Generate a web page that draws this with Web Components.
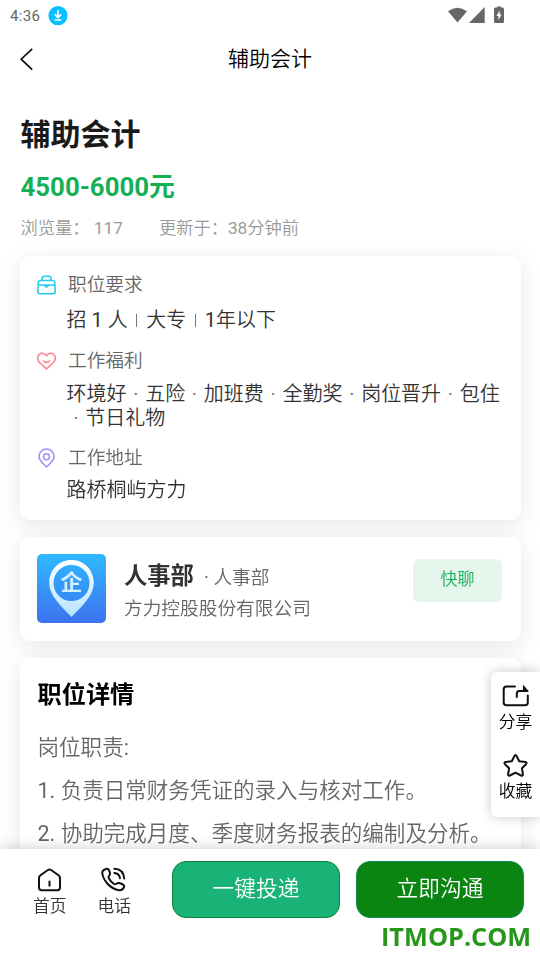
<!DOCTYPE html>
<html lang="zh-CN">
<head>
<meta charset="utf-8">
<title>辅助会计</title>
<style>
html,body{margin:0;height:100%;overflow:hidden;background:#fff}
body{font-family:Roboto,"Noto Sans CJK SC DemiLight","Noto Sans CJK SC",sans-serif;color:#333}
</style>
</head>
<body>
<job-page></job-page>
<script>
function define(name, html) {
  const t = document.createElement('template');
  t.innerHTML = html;
  customElements.define(name, class extends HTMLElement {
    constructor() {
      super();
      this.attachShadow({ mode: 'open' }).append(t.content.cloneNode(true));
    }
  });
}

define('status-bar', `
<style>
:host{display:flex;height:32px;align-items:center;box-sizing:border-box;padding:0 35px 0 10px;color:#666;font-size:15px;letter-spacing:.35px;flex:none}
span{width:38px;white-space:nowrap}
svg{display:block}
.r{margin-left:auto}
</style>
<span>4:36</span>
<svg width="20" height="20" viewBox="0 0 20 20"><circle cx="10" cy="9.600" r="9.6" fill="#08bfff"/><path d="M10 4.200v7M6.800 8.400l3.200 3.200 3.200-3.200M6.600 14h6.800" fill="none" stroke="#fff" stroke-width="1.7"/></svg>
<svg class="r" width="57" height="20" viewBox="0 0 57 20" fill="#666"><g transform="translate(0 -1.400)"><path d="M0 6.700Q9.500-.3 19 6.700L9.500 18Z"/><path d="M21 18.500L36.700 2.500V18.500Z"/><path d="M46 4.500Q46 3 47.500 3H49V2h4v1h1.500Q56 3 56 4.500V17Q56 18.500 54.500 18.500H47.500Q46 18.500 46 17Z"/><path d="M51.700 5.800L48.400 11.300H50.400V15.500L53.700 10H51.700Z" fill="#fff"/></g></svg>
`);

define('nav-bar', `
<style>
:host{display:grid;grid-template-columns:60px 1fr 60px;height:54px;margin-bottom:2px;align-items:center;text-align:center;font-size:21px;line-height:30px;color:#000;flex:none}
svg{display:block;margin-left:19px}
</style>
<svg width="16" height="24" viewBox="0 0 16 24"><path d="M13.200 1.800L2.200 12.200L13.200 22.600" fill="none" stroke="#111" stroke-width="1.700"/></svg>
<slot></slot>
`);

define('job-summary', `
<style>
:host{display:block;padding:25px 1px 0 .5px;height:168px;box-sizing:border-box}
h1{margin:0;font:700 30px/44px Roboto,"Noto Sans CJK SC",sans-serif;color:#1a1a1a}
.pay{font:700 25.800px/36px Roboto,"Noto Sans CJK SC",sans-serif;margin-top:12px;color:#15af56}
.meta{display:flex;gap:36px;font-size:17.250px;line-height:26px;margin-top:10px;color:#999}
</style>
<h1><slot name="title"></slot></h1>
<div class="pay"><slot name="pay"></slot></div>
<div class="meta"><slot name="views"></slot><slot name="updated"></slot></div>
`);

define('info-card', `
<style>
:host{display:block;background:#fff;border-radius:11px;box-sizing:border-box}
</style>
<slot></slot>
`);

define('info-section', `
<style>
:host{display:grid;grid-template-columns:19px 1fr;column-gap:12px;align-items:center}
svg,slot[name=icon]{display:block}
.t{font-size:18.700px;line-height:28px;color:#666}
.v{grid-column:1/3;padding-left:29.500px;font-size:20px;line-height:24px;color:#333;white-space:pre-wrap;margin-top:var(--gap,6px);word-spacing:var(--ws,0)}
</style>
<slot name="icon"></slot>
<div class="t"><slot name="label"></slot></div>
<div class="v"><slot></slot></div>
`);

define('company-logo', `
<style>:host{display:block;width:69px;height:69px}svg{display:block}text{font:700 22px "Noto Sans CJK SC",sans-serif}</style>
<svg width="69" height="69" viewBox="0 0 69 69"><defs><linearGradient id="g" x2="0" y2="1"><stop stop-color="#2fb9ff"/><stop offset="1" stop-color="#3c72ef"/></linearGradient><linearGradient id="p" x2="0" y2="1"><stop stop-color="#fff"/><stop offset="1" stop-color="#b5e4ff"/></linearGradient></defs>
<rect width="69" height="69" rx="5" fill="url(#g)"/>
<path fill="url(#p)" fill-rule="evenodd" d="M34.500 6C21.500 6 12.200 16.500 12.200 28.500C12.200 41 22 50 34.500 63C47 50 56.800 41 56.800 28.500C56.800 16.500 47.500 6 34.500 6ZM34.500 11A18 18 0 1 1 34.500 47A18 18 0 1 1 34.500 11Z"/>
<text x="34.500" y="35.800" text-anchor="middle" fill="#d5f0ff">企</text></svg>
`);

define('recruiter-row', `
<style>
:host{display:flex;align-items:flex-start;height:104px;padding:17px 19px 0 17px;box-sizing:border-box}
.b{margin-left:18px;flex:1;padding-top:6px}
.n{display:flex;align-items:baseline;font-size:18.700px;line-height:32px;color:#666;white-space:pre}
b{font:700 23.300px/32px Roboto,"Noto Sans CJK SC",sans-serif;color:#333;margin-right:10px}
.c{font-size:18.700px;line-height:30px;color:#666}
.chat{width:89px;height:43px;border-radius:6px;background:#e7f6ed;color:#15af56;font-size:17px;line-height:40px;text-align:center;margin-top:5px}
</style>
<company-logo></company-logo>
<div class="b"><div class="n"><b><slot name="name"></slot></b><slot name="role"></slot></div><div class="c"><slot name="company"></slot></div></div>
<div class="chat"><slot name="action"></slot></div>
`);

define('job-detail', `
<style>
:host{display:block;padding:19px 18px 0 17.500px;height:240px;box-sizing:border-box;font-size:21.550px;line-height:43px;color:#666;white-space:nowrap}
h2{margin:0 0 13px;font:700 24.200px/36px Roboto,"Noto Sans CJK SC",sans-serif;color:#000}
</style>
<h2><slot name="title"></slot></h2>
<slot></slot>
`);

define('icon-label', `
<style>
:host{display:flex;flex-direction:column;align-items:center;font-size:16.800px;line-height:24px}
</style>
<slot name="icon"></slot><slot></slot>
`);

define('side-panel', `
<style>
:host{display:flex;flex-direction:column;gap:17px;position:absolute;right:0;top:672px;width:49px;height:145px;box-sizing:border-box;padding:12px 0 0;background:#fff;border-radius:6px 0 0 6px;box-shadow:0 0 12px rgba(0,0,0,.22);color:#000}
</style>
<slot></slot>
`);

define('pill-button', `
<style>
:host{display:block;width:168px;height:57px;box-sizing:border-box;border:1px solid var(--edge);border-radius:14px;background:var(--fill);color:#fff;font-size:21.700px;line-height:53px;text-align:center}
</style>
<slot></slot>
`);

define('bottom-bar', `
<style>
:host{display:flex;position:relative;height:111px;flex:none;background:#fff;box-shadow:0 0 14px rgba(0,0,0,.2);box-sizing:border-box;padding:12px 16px 0 33px;color:#333}
.tabs{display:flex;gap:31px;width:139px;padding-top:6px;box-sizing:border-box}
.btns{display:flex;gap:16px}
.mark{position:absolute;left:381px;top:70px;font:700 25.300px/34px "Open Sans",sans-serif;color:#27961b;white-space:nowrap}
</style>
<div class="tabs"><slot name="tab"></slot></div>
<div class="btns"><slot name="btn"></slot></div>
<div class="mark"><slot name="mark"></slot></div>
`);

define('job-page', `
<style>
:host{display:flex;flex-direction:column;position:relative;width:540px;height:960px;overflow:hidden;background:#fff}
main{flex:1;min-height:0;overflow:hidden;padding:0 19px 0 20px}
.cards{display:flex;flex-direction:column;gap:17px;filter:drop-shadow(0 5px 11px rgba(0,0,0,.095))}
.req{height:264px;padding:14px 17px 0 17px}
.req info-section+info-section{margin-top:15px}
.req info-section:last-child{margin-top:14px}
.bar{display:inline-block;width:1px;height:13px;margin:0 8.800px;background:#777}
.dot{color:#777}
svg{display:block;fill:none;stroke-linecap:round;stroke-linejoin:round}
</style>
<status-bar></status-bar>
<nav-bar>辅助会计</nav-bar>
<main>
<job-summary><span slot="title">辅助会计</span><span slot="pay">4500-6000元</span><span slot="views">浏览量： 117</span><span slot="updated">更新于：38分钟前</span></job-summary>
<div class="cards">
<info-card class="req">
<info-section style="--gap:9px;padding-top:1px"><svg slot="icon" width="19" height="20" viewBox="0 0 19 20" stroke="#24cdec" stroke-width="1.600"><path d="M5 5.300V3.500Q5 1.200 7.300 1.200H11.700Q14 1.200 14 3.500V5.300M3.500 5.500H15.500Q17.500 5.500 17.700 7.500L18.200 16.500Q18.200 18.700 16 18.700H3Q.8 18.700.8 16.500L1.300 7.500Q1.500 5.500 3.500 5.500ZM1 10H18M7.500 10.300Q9.500 13.500 11.500 10.300"/></svg><span slot="label">职位要求</span>招 1 人<span class="bar"></span>大专<span class="bar"></span>1年以下</info-section>
<info-section style="--ws:1.750px;--gap:7px"><svg slot="icon" width="19" height="18" viewBox="0 0 19 18" stroke="#ff8292" stroke-width="1.600"><path d="M9.500 16.800L2.500 10.500C-.8 7 .8 1.500 5 1.200C7.400 1 8.600 2.500 9.500 3.800C10.400 2.500 11.600 1 14 1.200C18.200 1.500 19.800 7 16.500 10.500ZM6.500 9Q9.500 11.800 12.500 9"/></svg><span slot="label">工作福利</span>环境好<span class="dot"> · </span>五险<span class="dot"> · </span>加班费<span class="dot"> · </span>全勤奖<span class="dot"> · </span>岗位晋升<span class="dot"> · </span>包住<br><span class="dot"> · </span>节日礼物</info-section>
<info-section><svg slot="icon" width="19" height="20" viewBox="0 0 19 20" stroke="#9990ff" stroke-width="1.600"><path d="M9.500 19C7 16.500 2 12.500 2 8.500A7.500 7.500 0 0 1 17 8.500C17 12.500 12 16.500 9.500 19Z"/><circle cx="9.500" cy="8.800" r="3"/></svg><span slot="label">工作地址</span>路桥桐屿方力</info-section>
</info-card>
<info-card><recruiter-row><span slot="name">人事部</span><span slot="role">· 人事部</span><span slot="company">方力控股股份有限公司</span><span slot="action">快聊</span></recruiter-row></info-card>
<info-card><job-detail><span slot="title">职位详情</span><div>岗位职责:</div><div>1. 负责日常财务凭证的录入与核对工作。</div><div>2. 协助完成月度、季度财务报表的编制及分析。</div></job-detail></info-card>
</div>
</main>
<side-panel>
<icon-label><svg slot="icon" width="28" height="26" viewBox="0.500 0 28 26" stroke="#111" stroke-width="2"><path d="M13.500 2.500H5Q2.200 2.500 2.200 5.300V18.500Q2.200 21.300 5 21.300H23.500Q26.300 21.300 26.300 18.500V11.500M15.300 13V9.500Q15.300 7 17.800 7H26"/><path d="M22 1.800L26 7H22Z" fill="#111" stroke-width="1.200"/></svg>分享</icon-label>
<icon-label style="margin-top:2px"><svg slot="icon" width="26" height="26" viewBox="0.500 0.500 26 26" stroke="#111" stroke-width="2"><path d="M13 2.500Q13.700 2.500 14.200 3.700L16.700 8.700L22.800 9.600Q25 10 23.500 11.700L19.400 15.800L20.400 21.500Q20.600 23.900 18.600 23L13 20.200L7.400 23Q5.400 23.900 5.600 21.500L6.600 15.800L2.500 11.700Q1 10 3.200 9.600L9.300 8.700L11.800 3.700Q12.300 2.500 13 2.500Z"/></svg>收藏</icon-label>
</side-panel>
<bottom-bar>
<icon-label slot="tab"><svg slot="icon" width="26" height="27" viewBox="0.500 0 26 27" stroke="#111" stroke-width="2"><path d="M2.500 11Q2.500 9.300 4 8.200L11.400 3Q13 1.900 14.600 3L22 8.200Q23.500 9.300 23.500 11V20.500Q23.500 23.200 20.800 23.200H5.200Q2.500 23.200 2.500 20.500ZM13 14.500V18.700"/></svg>首页</icon-label>
<icon-label slot="tab"><svg slot="icon" width="26" height="27" viewBox="-.5 0 26 27" stroke="#111" stroke-width="2"><path d="M3.200 3L5.500 1.800Q7.500 1.400 8.300 3.200L9.300 6Q9.700 7.400 8.600 8.500Q7.500 9.500 8 11Q10 15 13.200 16.900Q14.500 17.600 15.700 16.700Q17 15.600 18.500 16L22 17.300Q24 18.200 23.300 20.200Q22 23.600 18.500 23.200C9 22 2 12.500 1.500 5.500Q1.500 3.900 3.200 3ZM13.700 1.800Q22.500 2 23.500 11.500M13.700 6Q18.700 6.500 19.300 11.200" transform="translate(-.8 0)"/></svg>电话</icon-label>
<pill-button slot="btn" style="--fill:#19b378;--edge:#0a8430">一键投递</pill-button>
<pill-button slot="btn" style="--fill:#0a8512;--edge:#0d8b5b">立即沟通</pill-button>
<span slot="mark">ITMOP.COM</span>
</bottom-bar>
`);
</script>
</body>
</html>
